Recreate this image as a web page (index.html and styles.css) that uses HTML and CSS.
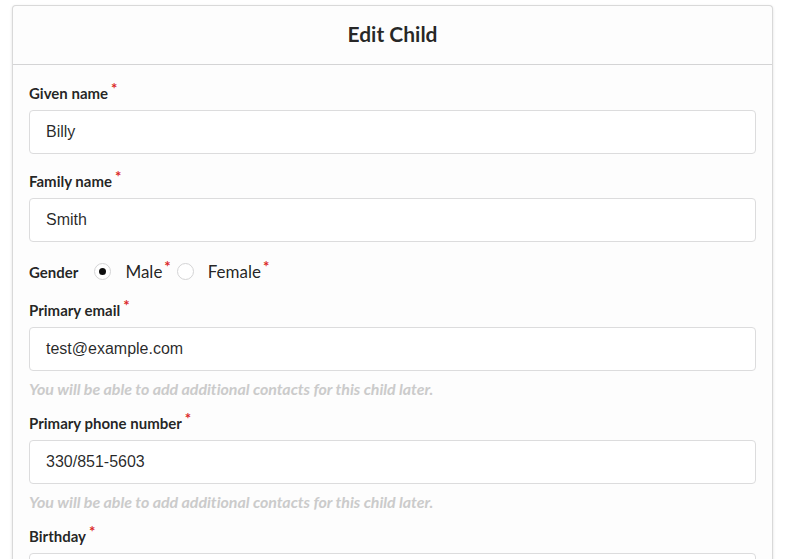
FILE: index.html
```html
<!DOCTYPE html>
<html lang="en">
<head>
<meta charset="utf-8">
<title>Edit Child</title>
<link rel="stylesheet" href="styles.css">
</head>
<body>
<div class="modal">
  <div class="modal-header">Edit Child</div>
  <form class="modal-body">
    <div class="field">
      <label class="label">Given name<span class="req">*</span></label>
      <div class="input">Billy</div>
    </div>
    <div class="field">
      <label class="label">Family name<span class="req">*</span></label>
      <div class="input">Smith</div>
    </div>
    <div class="field inline">
      <span class="label">Gender</span>
      <span class="radio"><span class="circle checked"></span><span class="radio-text">Male<span class="req">*</span></span></span>
      <span class="radio"><span class="circle"></span><span class="radio-text">Female<span class="req">*</span></span></span>
    </div>
    <div class="field with-hint">
      <label class="label">Primary email<span class="req">*</span></label>
      <div class="input">test@example.com</div>
      <div class="hint">You will be able to add additional contacts for this child later.</div>
    </div>
    <div class="field with-hint">
      <label class="label">Primary phone number<span class="req">*</span></label>
      <div class="input">330/851-5603</div>
      <div class="hint">You will be able to add additional contacts for this child later.</div>
    </div>
    <div class="field">
      <label class="label">Birthday<span class="req">*</span></label>
      <div class="input"></div>
    </div>
  </form>
</div>
</body>
</html>
```

FILE: styles.css
```css
html, body {
  margin: 0;
  padding: 0;
  background: #ffffff;
  overflow: hidden;
  height: 559px;
}

body {
  font-family: Lato, "Open Sans", sans-serif;
  color: rgba(0, 0, 0, 0.87);
}

.modal {
  margin: 5px 0 0 12px;
  width: 761px;
  box-sizing: border-box;
  background: #fdfdfd;
  border: 1px solid #d9d9d9;
  border-bottom: none;
  border-radius: 4px 4px 0 0;
  box-shadow: 0 1px 3px rgba(0, 0, 0, 0.12);
  height: 600px;
}

.modal-header {
  padding: 15px 16px 17px;
  line-height: 26px;
  font-size: 21px;
  font-weight: 700;
  text-align: center;
  color: rgba(0, 0, 0, 0.85);
  border-bottom: 1px solid #d4d4d5;
}

.modal-body {
  display: flex;
  flex-direction: column;
  padding: 19px 16px 0;
  margin: 0;
}

.field {
  display: flex;
  flex-direction: column;
  margin-bottom: 18px;
}

.field.with-hint {
  margin-bottom: 16px;
}

.label {
  display: block;
  font-size: 15px;
  line-height: 18px;
  font-weight: 700;
  margin-bottom: 8px;
  color: rgba(0, 0, 0, 0.87);
}

.req {
  color: #db2828;
  font-size: 15px;
  font-weight: 700;
  position: relative;
  top: -5px;
  margin-left: 3px;
}

.input {
  box-sizing: border-box;
  height: 44px;
  border: 1px solid #dcdcdd;
  border-radius: 4px;
  background: #ffffff;
  padding: 0 16px;
  display: flex;
  align-items: center;
  font-family: "Liberation Sans", Arial, sans-serif;
  font-size: 16px;
  color: rgba(0, 0, 0, 0.85);
}

.hint {
  margin-top: 9px;
  font-size: 16px;
  line-height: 18px;
  font-style: italic;
  font-weight: 700;
  letter-spacing: -0.06px;
  color: #cbcbcb;
}

.field.inline {
  flex-direction: row;
  align-items: center;
  height: 23px;
}

.field.inline .label {
  margin: 0 16px 0 0;
}

.radio {
  display: inline-flex;
  align-items: center;
  margin-right: 6px;
}

.circle {
  box-sizing: border-box;
  width: 17px;
  height: 17px;
  border: 1px solid #d4d4d5;
  border-radius: 50%;
  background: #fff;
  display: inline-flex;
  align-items: center;
  justify-content: center;
  margin-right: 14px;
}

.circle.checked::after {
  content: "";
  width: 7px;
  height: 7px;
  border-radius: 50%;
  background: rgba(0, 0, 0, 0.95);
}

.radio-text {
  font-size: 17px;
  color: rgba(0, 0, 0, 0.87);
}

.radio-text .req {
  top: -6px;
  margin-left: 2px;
}
```
